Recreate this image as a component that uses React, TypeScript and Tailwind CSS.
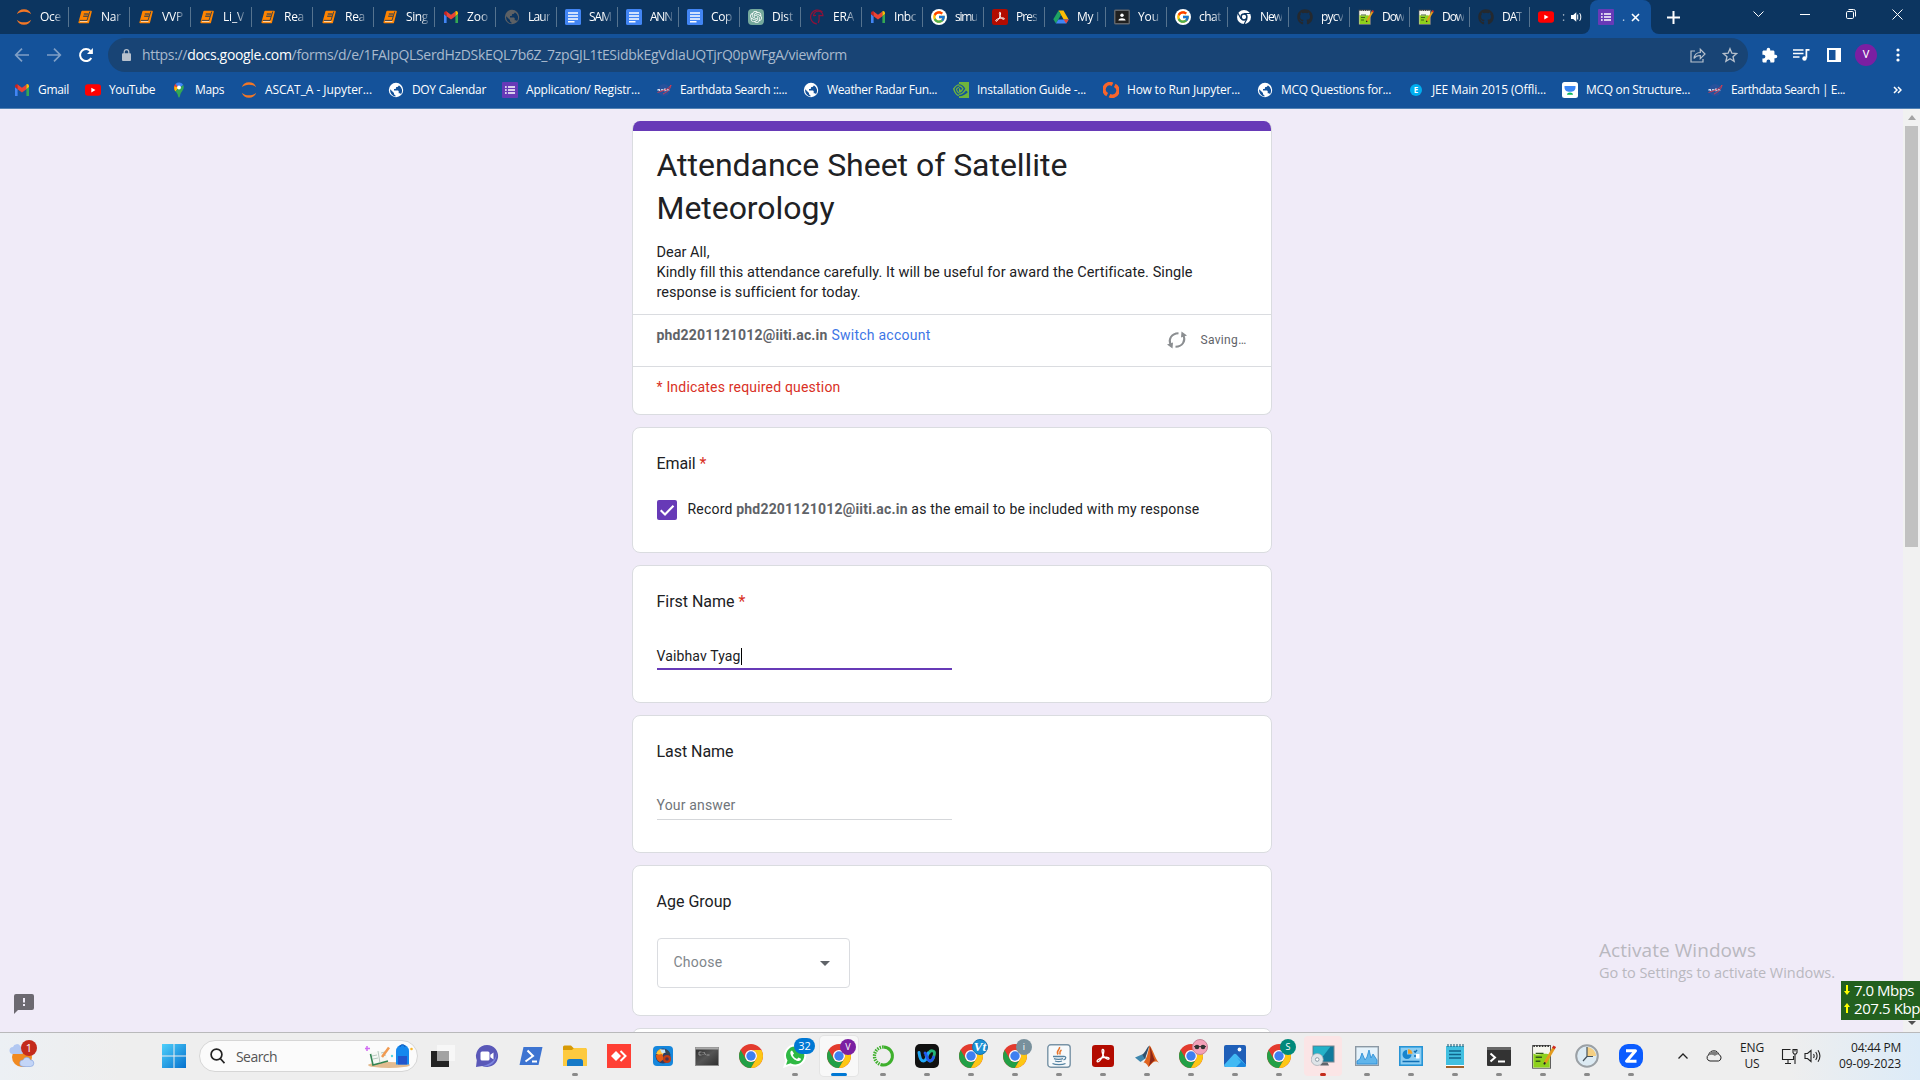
import React, { useLayoutEffect, useRef } from "react";
import { FcGoogle } from "react-icons/fc";
import { FaGithub } from "react-icons/fa";
import { SiNvidia, SiOpenai } from "react-icons/si";

/** Text that spreads its letters so the run fills exactly `w` pixels. */
function Fit({ w, className = "", children }: { w: number; className?: string; children: React.ReactNode }) {
  const ref = useRef<HTMLSpanElement>(null);
  useLayoutEffect(() => {
    const el = ref.current;
    if (!el) return;
    el.style.letterSpacing = "0px";
    const natural = el.getBoundingClientRect().width;
    const n = (el.textContent || "").length;
    el.style.letterSpacing = (w - natural) / n + "px";
  }, [w]);
  return (
    <span ref={ref} className={"inline-block shrink-0 whitespace-pre " + className}>
      {children}
    </span>
  );
}

/* ---------- logos ---------- */

const Chrome = ({ s = 24 }: { s?: number }) => (
  <svg width={s} height={s} viewBox="1 1 46 46">
    <circle cx="24" cy="24" r="23" fill="#e33b2e" />
    <path d="M4.100 12.500 14 29.750A11.500 11.500 0 0 0 34 29.750L24 47A23 23 0 0 1 4.100 12.500z" fill="#23a046" />
    <path d="M43.900 12.500A23 23 0 0 1 24 47L34 29.750A11.500 11.500 0 0 0 24 12.500z" fill="#fdc714" />
    <circle cx="24" cy="24" r="11.500" fill="#fff" />
    <circle cx="24" cy="24" r="9" fill="#3f7ff0" />
  </svg>
);
const Gmail = () => (
  <svg width="16" height="16" viewBox="0 0 16 16">
    <path d="M1 14h2.600V7.200L1 5z" fill="#4285f4" />
    <path d="M12.400 14H15V5l-2.600 2.200z" fill="#34a853" />
    <path d="M1 5v-.9C1 2.400 2.700 1.600 4 2.600L3.600 7.200z" fill="#c5221f" />
    <path d="M3.600 2.400 8 5.800l4.400-3.400v4.800L8 10.500 3.600 7.200z" fill="#ea4335" />
    <path d="M15 5v-.9c0-1.700-1.700-2.500-2.600-1.700v4.800z" fill="#fbbc04" />
  </svg>
);
const Jupyter = () => (
  <svg width="16" height="16" viewBox="0 0 16 16" fill="#f37726">
    <path d="M.8 5.200A7.700 7.700 0 0 1 15.200 5.200C12 1.800 4 1.800.8 5.200z" />
    <path d="M.8 10.800A7.700 7.700 0 0 0 15.200 10.800C12 14.200 4 14.200.8 10.800z" />
  </svg>
);
const Book = () => (
  <svg width="16" height="16" viewBox="0 0 16 16">
    <path d="M5.200 2.500H14l-2.800 11H2.200z" fill="#ff8400" stroke="#ff8400" strokeWidth="1.600" strokeLinejoin="round" />
    <path d="M6.800 5h4.700M6.200 7.200h4.700" stroke="#0c3560" strokeWidth="1" />
    <path d="M2.600 11.400H10l2.800-8.900" stroke="#0c3560" strokeWidth=".8" fill="none" />
    <path d="M3 12.600h7.500" stroke="#ffe3c4" strokeWidth=".9" />
  </svg>
);
const Globe = ({ bg = "#fff", fg = "#14529a" }: { bg?: string; fg?: string }) => (
  <svg width="16" height="16" viewBox="0 0 16 16">
    <circle cx="8" cy="8" r="7.200" fill={bg} />
    <path d="M2.200 7.200 6 11v1.200l1.500 1.300v1A6.300 6.300 0 0 1 2.200 7.200zM13 12.200c-.3-.8-1-1-1.600-1h-.7V9.200L10 8.500H6V7h1.400l.7-.8V5h1.400l1.300-1.300v-.4a6.200 6.200 0 0 1 2.200 8.900z" fill={fg} />
  </svg>
);
const Docs = () => (
  <svg width="16" height="16" viewBox="0 0 16 16">
    <rect width="16" height="16" rx="1.500" fill="#4285f4" />
    <path d="M3 4h10M3 7h10M3 10h10M3 12.800h6.500" stroke="#fff" strokeWidth="1.600" />
  </svg>
);
const FormIcon = () => (
  <svg width="16" height="16" viewBox="0 0 16 16">
    <rect width="16" height="16" rx="1" fill="#673ab7" />
    <path d="M6 5h7M6 8h7M6 11h7" stroke="#fff" strokeWidth="1.600" />
    <path d="M3 5h1.700M3 8h1.700M3 11h1.700" stroke="#fff" strokeWidth="1.600" />
  </svg>
);
const Gpt = () => (
  <span className="flex size-4 items-center justify-center rounded-sm bg-[#75a99c] text-white">
    <SiOpenai size={12} />
  </span>
);
const Era = () => (
  <svg width="16" height="16" viewBox="0 0 16 16" fill="none" stroke="#8e1238">
    <path d="M8 15A7 7 0 1 1 13.500 3" strokeWidth="1.200" />
    <path d="M4.500 7a4.500 4.500 0 0 1 9.500-.3L10 6.500c0 3 .8 4.500-.8 7.500M4.500 7 7 6.200" strokeWidth="1.200" />
  </svg>
);
const Pdf = ({ s = 16 }: { s?: number }) => (
  <svg width={s} height={s} viewBox="0 0 24 24">
    <rect width="24" height="24" rx="3.500" fill="#b30b00" />
    <path d="M11.800 4.800c1.700 0 1.200 3.700-.2 7.200-1.500 3.600-4.300 7.200-5.700 6.200-1.400-1.200 2-3.600 6-4.400 3.800-.8 6.900-.4 6.700 1-.3 1.500-3.600.4-5.600-2.200-1.900-2.500-2.700-7.800-1.200-7.800z" fill="none" stroke="#fff" strokeWidth="1.500" />
  </svg>
);
const Drive = () => (
  <svg width="16" height="16" viewBox="0 0 16 16">
    <path d="M5.500 1.500h5L15.700 10.500h-5z" fill="#fbbc04" />
    <path d="M5.500 1.500 8 6 2.900 14.500.3 10.300z" fill="#1ea362" />
    <path d="M5.400 10.500h10.300l-2.500 4H2.900z" fill="#4285f4" />
    <path d="M13.200 14.500l2.500-4h-5z" fill="#ea4335" />
  </svg>
);
const Classroom = () => (
  <svg width="16" height="16" viewBox="0 0 16 16">
    <rect x=".7" y="1.200" width="14.600" height="13.600" rx="1" fill="#202020" stroke="#61656a" strokeWidth="1.500" />
    <circle cx="8" cy="6.200" r="1.700" fill="#fff" />
    <path d="M4.300 11.500C5 8.500 11 8.500 11.700 11.500z" fill="#fff" />
  </svg>
);
const GoogleG = () => (
  <span className="flex size-4 items-center justify-center rounded-full bg-white">
    <FcGoogle size={14} />
  </span>
);
const ChromeMono = () => (
  <svg width="16" height="16" viewBox="0 0 16 16">
    <circle cx="8" cy="8" r="7" fill="#fff" />
    <circle cx="8" cy="8" r="2.900" fill="none" stroke="#0c3560" strokeWidth="1.500" />
    <path d="M8 4.500h6.500M5 9.800 2 4.300M11 9.800 8.200 15" stroke="#0c3560" strokeWidth="1.200" />
  </svg>
);
const NotepadPP = ({ s = 16 }: { s?: number }) => (
  <svg width={s} height={s} viewBox="0 0 16 16">
    <rect x="1" y="1" width="11.500" height="14.500" fill="#f5f5ee" stroke="#555" strokeWidth=".6" />
    <path d="M1.500 6c4 2 7-1 10.500 1v8H1.500z" fill="#8ed11c" />
    <path d="M1.500 1.300h10.500" stroke="#333" strokeWidth="1.200" strokeDasharray="1 .8" />
    <path d="M3 6h5M3 8.500h4M3 11h3" stroke="#31581a" strokeWidth=".9" />
    <path d="M14.600 2.500 9 12" stroke="#e39b1e" strokeWidth="1.900" />
    <path d="M15.200 1.400l-.9 1.500" stroke="#cf2d23" strokeWidth="2" />
    <path d="M9 11.700l-.6 1.300" stroke="#222" strokeWidth="1.200" />
  </svg>
);
const YouTube = () => (
  <svg width="16" height="16" viewBox="0 0 16 16">
    <rect y="2.300" width="16" height="11.500" rx="2.800" fill="#f00" />
    <path d="M6.300 5.700v4.700L10.500 8z" fill="#fff" />
  </svg>
);
const MapsPin = () => (
  <svg width="16" height="16" viewBox="0 0 16 16">
    <path d="M3.100 4.500c-.3 1.900.2 3.300 1.200 4.700L9 4z" fill="#fbbc04" />
    <path d="M3.100 4.400A5 5 0 0 1 4.600 1.800L8 5 4 8.500z" fill="#ea4335" />
    <path d="M4.500 1.900A5 5 0 0 1 12.300 3L8 6z" fill="#4285f4" />
    <path d="M12.300 3c1.800 4-2 6.500-2.900 9.300-.3 1.300-.5 3.200-1.400 3.200s-1-1.900-1.500-3.200C6 11 5 10 4.300 9.200z" fill="#34a853" />
    <path d="M3.300 4.500 4.300 9.200 8 5.500z" fill="#fbbc04" />
    <circle cx="8" cy="5.500" r="1.900" fill="#fff" />
  </svg>
);
const Nasa = () => (
  <svg width="16" height="16" viewBox="0 0 16 16">
    <circle cx="8" cy="8" r="6" fill="#26519b" />
    <path d="M2 8.800V7l1.500 1.800V7M5 8.800 6 7l1 1.800M8 8.700h1.800V7.800H8V7h1.800M11 8.800 12 7l1 1.800" stroke="#fff" strokeWidth=".8" fill="none" />
    <path d="M1.500 10.500C7 8.500 12 8 15 3c-1 5-4 7-8 9" stroke="#e0394a" strokeWidth=".9" fill="none" />
  </svg>
);
const OrangeRing = () => (
  <svg width="16" height="16" viewBox="0 0 16 16" fill="none" stroke="#f9652b" strokeWidth="3.600">
    <path d="M4.200 12.600A5.700 5.700 0 0 1 9.500 2.300" />
    <path d="M11.800 3.400A5.700 5.700 0 0 1 6.500 13.700" />
  </svg>
);
const Embibe = () => (
  <span className="ml-0.5 flex size-3 items-center justify-center rounded-full bg-[#00aef0] font-['Open_Sans',sans-serif] text-[8px] font-bold text-white">E</span>
);
const Unacademy = () => (
  <svg width="16" height="16" viewBox="0 0 16 16">
    <rect width="16" height="16" rx="2.500" fill="#fff" />
    <path d="M2.500 4h11v1c0 3.500-2 4.700-5.500 4.700S2.500 8.500 2.500 5z" fill="#3b86f5" />
    <path d="M5 12.800c0-3 6-3 6 0z" fill="#09b55b" />
  </svg>
);

/* ---------- browser chrome ---------- */

const tabs: [React.ReactNode, string, number][] = [
  [<Jupyter />, "Oce", 21],
  [<Book />, "Nar", 20],
  [<Book />, "VVP", 21],
  [<Book />, "Li_V", 21],
  [<Book />, "Rea", 20],
  [<Book />, "Rea", 20],
  [<Book />, "Sing", 22],
  [<Gmail />, "Zoo", 21],
  [<Globe bg="#5d6165" fg="#0c3560" />, "Laur", 22],
  [<Docs />, "SAM", 22],
  [<Docs />, "ANN", 22],
  [<Docs />, "Cop", 21],
  [<Gpt />, "Dist", 21],
  [<Era />, "ERA", 21],
  [<Gmail />, "Inbc", 22],
  [<GoogleG />, "simu", 22],
  [<Pdf />, "Pres", 21],
  [<Drive />, "My I", 22],
  [<Classroom />, "You", 21],
  [<GoogleG />, "chat", 22],
  [<ChromeMono />, "New", 22],
  [<FaGithub size={16} color="#24292f" />, "pycv", 22],
  [<NotepadPP />, "Dow", 22],
  [<NotepadPP />, "Dow", 22],
  [<FaGithub size={16} color="#24292f" />, "DAT", 20],
];

function TabStrip() {
  return (
    <div className="flex h-[34px] bg-[#0c3560] pl-2 text-[12px] text-white">
      {tabs.map(([icon, label, tw], i) => (
        <div key={i} className={"flex shrink-0 items-center pl-2 " + (i > 21 ? "w-[60px]" : "w-[61px]")}>
          <span className="flex w-4 shrink-0">{icon}</span>
          <Fit w={tw} className="ml-2 [mask-image:linear-gradient(to_right,black_65%,rgba(0,0,0,0.25))]">{label}</Fit>
          <span className="ml-auto h-5 w-px bg-[#55738f]" />
        </div>
      ))}
      <div className="flex w-[60px] shrink-0 items-center pl-2">
        <YouTube />
        <span className="ml-2 w-1 opacity-60">:</span>
        <svg className="ml-1" width="12" height="12" viewBox="0 0 12 12">
          <path d="M1 4h2.200L6.300 1.300v9.400L3.200 8H1z" fill="#fff" />
          <path d="M7.700 3.500v5M9.700 2.200c1.500 2 1.500 5.600 0 7.600" stroke="#fff" strokeWidth="1" fill="none" />
        </svg>
      </div>
      <div className="relative flex w-[61px] shrink-0 items-center rounded-t-lg bg-[#14529a] pl-2">
        <span className="absolute bottom-0 -left-2 size-2 bg-[#14529a]"><span className="block size-2 rounded-br-lg bg-[#0c3560]" /></span>
        <span className="absolute -right-2 bottom-0 size-2 bg-[#14529a]"><span className="block size-2 rounded-bl-lg bg-[#0c3560]" /></span>
        <FormIcon />
        <span className="ml-2 opacity-70">.</span>
        <svg className="ml-1.5" width="9" height="9" viewBox="0 0 9 9" stroke="#fff" strokeWidth="1.600"><path d="M1 1l7 7M8 1 1 8" /></svg>
      </div>
      <svg className="mt-[11px] ml-4" width="13" height="13" viewBox="0 0 13 13" stroke="#fff" strokeWidth="2"><path d="M6.500 0v13M0 6.500h13" /></svg>
      <div className="ml-auto flex items-start gap-9 pt-[9px] pr-[17px]">
        <svg width="11" height="11" viewBox="0 0 11 11" fill="none" stroke="#fff"><path d="M.5 2.500l5 5 5-5" /></svg>
        <svg width="10" height="11" viewBox="0 0 10 11" stroke="#fff"><path d="M0 5.500h10" /></svg>
        <svg width="10" height="10" viewBox="0 0 10 10" fill="none" stroke="#fff"><rect x=".5" y="2.500" width="7" height="7" rx="1.200" /><path d="M2.500.5h5a2 2 0 0 1 2 2v5" /></svg>
        <svg width="11" height="11" viewBox="0 0 11 11" stroke="#fff"><path d="M.5.500l10 10M10.500.500l-10 10" /></svg>
      </div>
    </div>
  );
}

function Toolbar() {
  return (
    <div className="flex h-[38px] items-center pt-1 pl-[14px]">
      <svg width="16" height="16" viewBox="0 0 16 16" fill="none" stroke="#7f9fc6" strokeWidth="1.700"><path d="M15 8H2M8 1.700 1.700 8 8 14.300" /></svg>
      <svg className="ml-4" width="16" height="16" viewBox="0 0 16 16" fill="none" stroke="#7f9fc6" strokeWidth="1.700"><path d="M1 8h13M8 1.700 14.300 8 8 14.300" /></svg>
      <svg className="ml-4" width="16" height="16" viewBox="0 0 16 16" fill="none" stroke="#fff" strokeWidth="2"><path d="M13.300 11A6 6 0 1 1 12.500 4" /><path d="M14.900 1v6H9z" fill="#fff" stroke="none" /></svg>
      <div className="ml-[14px] flex h-[34px] w-[1640px] items-center rounded-full bg-[#184475] pl-[14px]">
        <svg width="9" height="12" viewBox="0 0 9 12"><rect y="4.300" width="9" height="7.700" rx="1" fill="#b7c1cd" /><path d="M2.200 5V2.900a2.300 2.300 0 0 1 4.600 0V5" fill="none" stroke="#b7c1cd" strokeWidth="1.200" /></svg>
        <Fit w={705} className="-mt-px ml-[11px] text-[14px] text-[#a9bace]">
          https://<span className="text-white">docs.google.com</span>/forms/d/e/1FAIpQLSerdHzDSkEQL7b6Z_7zpGJL1tESidbkEgVdIaUQTjrQ0pWFgA/viewform
        </Fit>
        <svg className="ml-auto" width="16" height="16" viewBox="0 0 16 16" fill="none" stroke="#b7c1cd" strokeWidth="1.200"><path d="M5 4H1v11h12v-3M4 11.500c.5-4 3-6 6.300-6V2.300L15 7l-4.700 4.600V8.500C7.500 8.400 5.500 9.300 4 11.500z" /></svg>
        <svg className="mr-[10px] ml-4" width="16" height="16" viewBox="0 0 24 24" fill="none" stroke="#b7c1cd" strokeWidth="2"><path d="m12 2.500 2.800 6.700 7.200.6-5.500 4.700 1.700 7L12 17.700l-6.200 3.800 1.700-7L2 9.800l7.200-.6z" /></svg>
      </div>
      <svg className="ml-[13px]" width="17" height="17" viewBox="0 0 24 24" fill="#fff"><path d="M20.500 11H19V7c0-1.100-.9-2-2-2h-4V3.500a2.500 2.500 0 0 0-5 0V5H4c-1.100 0-2 .9-2 2v3.800h1.500a2.700 2.700 0 0 1 0 5.400H2V20c0 1.100.9 2 2 2h3.800v-1.500a2.700 2.700 0 0 1 5.400 0V22H17c1.100 0 2-.9 2-2v-4h1.500a2.500 2.500 0 0 0 0-5z" /></svg>
      <svg className="ml-[15px]" width="17" height="14" viewBox="0 0 17 14" fill="none" stroke="#fff" strokeWidth="1.700"><path d="M0 2h10.500M0 5.500h10.500M0 9h6.500M16.500 1.800H13.400v8" /><circle cx="11.500" cy="10.500" r="2.200" fill="#fff" stroke="none" /></svg>
      <svg className="ml-[17px]" width="14" height="14" viewBox="0 0 14 14"><rect x="1" y="1" width="12" height="12" fill="none" stroke="#fff" strokeWidth="2" /><path d="M8.500 1h4.500v12H8.500z" fill="#fff" /></svg>
      <span className="ml-[14px] flex size-[22px] items-center justify-center rounded-full bg-[#7b1fa2] font-[Roboto,sans-serif] text-[11px] text-white">V</span>
      <svg className="ml-[19px]" width="4" height="14" viewBox="0 0 4 14" fill="#fff"><circle cx="2" cy="2" r="1.600" /><circle cx="2" cy="7" r="1.600" /><circle cx="2" cy="12" r="1.600" /></svg>
    </div>
  );
}

const bookmarks: [React.ReactNode, string, number, number][] = [
  [<Gmail />, "Gmail", 31, 71],
  [<YouTube />, "YouTube", 46, 86],
  [<MapsPin />, "Maps", 29, 70],
  [<Jupyter />, "ASCAT_A - Jupyter...", 107, 147],
  [<Globe />, "DOY Calendar", 74, 114],
  [<FormIcon />, "Application/ Registr...", 114, 154],
  [<Nasa />, "Earthdata Search ::...", 107, 147],
  [<Globe />, "Weather Radar Fun...", 110, 150],
  [<SiNvidia size={16} color="#6fb43c" className="scale-y-150" />, "Installation Guide -...", 109, 150],
  [<OrangeRing />, "How to Run Jupyter...", 113, 154],
  [<Globe />, "MCQ Questions for...", 110, 151],
  [<Embibe />, "JEE Main 2015 (Offli...", 114, 154],
  [<Unacademy />, "MCQ on Structure...", 104, 145],
  [<Nasa />, "Earthdata Search | E...", 114, 154],
];

function Bookmarks() {
  return (
    <div className="flex h-9 items-center pl-[14px] text-[12px] text-white">
      {bookmarks.map(([icon, label, tw, w], i) => (
        <div key={i} className="flex shrink-0 items-center gap-2" style={{ width: w }}>
          <span className="flex w-4 shrink-0">{icon}</span>
          <Fit w={tw}>{label}</Fit>
        </div>
      ))}
      <svg className="ml-8" width="9" height="8" viewBox="0 0 9 8" fill="none" stroke="#fff" strokeWidth="1.500"><path d="M1 1l3 3-3 3M5 1l3 3-3 3" /></svg>
    </div>
  );
}

/* ---------- form ---------- */

const cardBase = "w-[640px] shrink-0 rounded-lg border border-[#dadce0] bg-white";

function Heading({ w, label, required }: { w: number; label: string; required?: boolean }) {
  return (
    <div className="flex h-6 items-center gap-1 text-[16px] leading-6 text-[#202124]">
      <Fit w={w}>{label}</Fit>
      {required && <span className="text-[#d93025]">*</span>}
    </div>
  );
}

function FormPage() {
  return (
    <div className="flex flex-1 flex-col items-center gap-3 overflow-hidden pt-3 font-[Roboto,sans-serif]">
      <div className={cardBase + " h-[294px] overflow-hidden border-t-0"}>
        <div className="-mx-px h-[10px] bg-[#673ab7]" />
        <div className="h-[183px] px-6 pt-[13px]">
          <h1 className="text-[32px] leading-[43px] text-[#202124]">
            <Fit w={411}>Attendance Sheet of Satellite</Fit>
            <br />
            <Fit w={178}>Meteorology</Fit>
          </h1>
          <p className="mt-[13px] text-[14.500px] leading-5 text-[#202124]">
            <Fit w={53}>Dear All,</Fit>
            <br />
            <Fit w={535}>Kindly fill this attendance carefully. It will be useful for award the Certificate. Single</Fit>
            <br />
            <Fit w={203}>response is sufficient for today.</Fit>
          </p>
        </div>
        <div className="flex h-[52px] border-t border-[#dadce0] px-6 text-[14px] leading-5">
          <div className="flex gap-1 pt-[10px]">
            <Fit w={171} className="font-bold text-[#5f6368]">phd2201121012@iiti.ac.in</Fit>
            <Fit w={99} className="text-[#3d76e6]">Switch account</Fit>
          </div>
          <div className="ml-auto flex items-center gap-[14px] pb-0.5 text-[12px] text-[#5f6368]">
            <svg width="20" height="18" viewBox="0 0 20 18" fill="none" stroke="#8b8e91" strokeWidth="2">
              <path d="M3.300 13C1.500 8.500 4 2.500 11.500 2.200M16.700 5C18.500 9.500 16 15.500 8.500 15.800" />
              <path d="M0 13.500l6-2-.5 6zM20 4.500 14 6.500l.5-6z" fill="#8b8e91" stroke="none" />
            </svg>
            <Fit w={46}>Saving…</Fit>
          </div>
        </div>
        <div className="h-12 border-t border-[#dadce0] px-6 pt-[10px] text-[14px] leading-5 text-[#d93025]">
          <Fit w={184}>* Indicates required question</Fit>
        </div>
      </div>

      <div className={cardBase + " h-[126px] px-6 pt-6"}>
        <Heading w={39} label="Email" required />
        <div className="mt-6 flex h-5 items-center text-[14px] text-[#202124]">
          <svg width="20" height="20" viewBox="0 0 20 20"><rect width="20" height="20" rx="2" fill="#673ab7" /><path d="M3.700 10.200 8 14.400 16.500 5.700" fill="none" stroke="#fff" strokeWidth="2.100" /></svg>
          <Fit w={512} className="-mt-0.5 ml-[11px]">
            Record <b className="font-bold text-[#5f6368]">phd2201121012@iiti.ac.in</b> as the email to be included with my response
          </Fit>
        </div>
      </div>

      <div className={cardBase + " h-[138px] px-6 pt-6"}>
        <Heading w={78} label="First Name" required />
        <div className="mt-[30px] flex h-6 w-[295px] items-center text-[14px] text-[#202124]">
          <Fit w={84}>Vaibhav Tyag</Fit>
          <span className="h-[17px] w-px bg-black" />
        </div>
        <div className="h-0.5 w-[295px] bg-[#673ab7]" />
      </div>

      <div className={cardBase + " h-[138px] px-6 pt-6"}>
        <Heading w={77} label="Last Name" />
        <div className="mt-[29px] flex h-6 w-[295px] items-center text-[14px] text-[#70757a]">
          <Fit w={79}>Your answer</Fit>
        </div>
        <div className="mt-0.5 h-px w-[295px] bg-[#d5d7da]" />
      </div>

      <div className={cardBase + " h-[151px] px-6 pt-6"}>
        <Heading w={75} label="Age Group" />
        <div className="mt-6 flex h-[50px] w-[193px] items-center rounded border border-[#dadce0] pr-[19px] pl-4 text-[14px] text-[#80868b]">
          <Fit w={49} className="-mt-0.5">Choose</Fit>
          <svg className="ml-auto" width="10" height="5" viewBox="0 0 10 5"><path d="M0 0h10L5 5z" fill="#5f6368" /></svg>
        </div>
      </div>

      <div className={cardBase + " h-[138px]"} />
    </div>
  );
}

/* ---------- taskbar ---------- */

const Badge = ({ className, children }: { className: string; children?: React.ReactNode }) => (
  <span className={"absolute flex items-center justify-center rounded-full text-white " + className}>{children}</span>
);

const Person = ({ children, badge }: { children: React.ReactNode; badge: string }) => (
  <>
    <Chrome />
    <Badge className={"-top-[5px] left-[13px] size-4 text-[9px] " + badge}>{children}</Badge>
  </>
);

type App = { icon: React.ReactNode; mark?: "dot" | "active" | "alert" };

const apps: App[] = [
  { icon: <svg width="24" height="24" viewBox="0 0 24 24"><rect y="7" width="18" height="16" fill="#242424" /><rect x="6" y="1" width="18" height="16" fill="#f7f7f7" /><path d="M6 7h12v10H6z" fill="#a2a2a2" /></svg> },
  { icon: <svg width="24" height="24" viewBox="0 0 24 24"><path d="M12 1a11 11 0 1 1-4.500 21L1 23l.8-6.700A11 11 0 0 1 12 1z" fill="#5a58b8" /><path d="M20 6A11 11 0 0 1 8 22l-1.500.4C20 19 23 12 20 6z" fill="#7d86e0" /><rect x="5.500" y="7.500" width="9" height="9" rx="1.500" fill="#fff" /><path d="M15.300 10.800 18.500 8.500v7l-3.200-2.300z" fill="#fff" /></svg> },
  { icon: <svg width="24" height="24" viewBox="0 0 24 24"><path d="M4.500 3H23.500L19.500 21H.5z" fill="#3d74d1" /><path d="M8.500 6.500 14 12l-7.500 5.500M13 17.500h5" fill="none" stroke="#fff" strokeWidth="2" /></svg> },
  { mark: "dot", icon: <svg width="24" height="24" viewBox="0 0 24 24"><path d="M0 3a1.500 1.500 0 0 1 1.500-1.500H8L10.500 4H23v4H0z" fill="#d79a05" /><path d="M0 6h9l2-2h11.500A1.500 1.500 0 0 1 24 5.500V22H0z" fill="#fdca3f" /><path d="M4 22v-4.500A2.500 2.500 0 0 1 6.500 15h11a2.500 2.500 0 0 1 2.500 2.500V22z" fill="#1679c7" /></svg> },
  { icon: <svg width="24" height="24" viewBox="0 0 24 24"><rect width="24" height="24" fill="#ff3f34" /><path d="M9 7l5 5-5 5-5-5z" fill="#fff" /><path d="M13.500 7l5 5-5 5" fill="none" stroke="#fff" strokeWidth="2" /></svg> },
  { icon: <svg width="20" height="20" viewBox="0 0 20 20"><rect width="20" height="20" rx="4" fill="#1687dc" /><circle cx="10" cy="10" r="7.500" fill="#2d3d66" /><path d="M3 8a7.500 7.500 0 0 1 4-5l5 2-3 5z" fill="#ffc23a" /><path d="M3 9l6-1 2 5-4 3a7.500 7.500 0 0 1-4-7z" fill="#e25b16" /><path d="M7 3.500h5l1 3-4 1z" fill="#cbe8f8" /><circle cx="14" cy="13" r="4" fill="#bf3c12" /><circle cx="14" cy="13" r="1.800" fill="#4a3250" /><path d="M12 4c3 0 5 2 5.500 5L13 8z" fill="#37474f" /></svg> },
  { icon: <svg width="24" height="19" viewBox="0 0 24 19"><defs><linearGradient id="cmd" x1="0" y1="0" x2="1" y2="1"><stop stopColor="#2b2b2b" /><stop offset=".5" stopColor="#555" /><stop offset="1" stopColor="#2e2e2e" /></linearGradient></defs><rect x=".5" y=".5" width="23" height="18" fill="url(#cmd)" stroke="#8c8c8c" /><path d="M.5 1.500h23" stroke="#aaa" strokeWidth="2" /><path d="M6.500 5H4v3h2.500M8 5v.8M8 7.200V8M9 5l1.500 3M11.500 8h3" stroke="#aaa" strokeWidth=".8" fill="none" /></svg> },
  { icon: <Chrome /> },
  { mark: "dot", icon: <><svg width="24" height="24" viewBox="0 0 24 24"><path d="M12.500 1.500a10 10 0 1 1-5 18.800L1.500 22.500l1.900-6A10 10 0 0 1 12.500 1.500z" fill="#2fb944" stroke="#fff" strokeWidth="2" /><path d="M9 6.500c-1.500.3-2 2-1.500 3.500 1 3.500 4 6.300 7.500 7 1.500.3 3-.5 3-2.200l-2.500-1.300-1.500 1.500c-2-.7-3.500-2.200-4.200-4l1.200-1.500z" fill="#fff" /></svg><Badge className="-top-[6px] left-[11px] h-4 w-[21px] bg-[#0078d4] text-[11px]">32</Badge></> },
  { mark: "active", icon: <Person badge="bg-[#7b1fa2]">V</Person> },
  { mark: "dot", icon: <svg width="24" height="24" viewBox="0 0 24 24" fill="none"><path d="M12.500 3a9 9 0 1 1-3 17.500" stroke="#3eb02c" strokeWidth="3" /><path d="M12.500 3a9 9 0 0 0-3 17.500" stroke="#3eb02c" strokeWidth="3.300" strokeDasharray="1.500 1" /></svg> },
  { mark: "dot", icon: <svg width="24" height="24" viewBox="0 0 24 24"><rect width="24" height="24" rx="5" fill="#111" /><path d="M14 9c1.500-3.500 6-2.500 5.500.5-.6 4-2 7.500-4.500 7.500-2.200 0-3-2.500-4-5.500" fill="none" stroke="#24b57a" strokeWidth="2.800" strokeLinecap="round" /><path d="M4 8.500C4.500 12.500 5.500 17 8.500 17s3.500-5 4.500-8" fill="none" stroke="#21a8f5" strokeWidth="3" strokeLinecap="round" /><path d="M10 9c1.500 1 2 8 5 8 2 0 3-2 3.500-4" fill="none" stroke="#2359ee" strokeWidth="2.800" strokeLinecap="round" /></svg> },
  { mark: "dot", icon: <Person badge="bg-[#1a91d6] border border-[#1873ad] font-['Liberation_Serif',serif] !text-[13px] font-bold italic">Vt</Person> },
  { mark: "dot", icon: <Person badge="bg-[#78909c]">i</Person> },
  { mark: "dot", icon: <svg width="24" height="24" viewBox="0 0 24 24" fill="none"><rect x=".8" y=".8" width="22.400" height="22.400" rx="3" fill="#f6f9fb" stroke="#7893a6" strokeWidth="1.400" /><path d="M12.500 3c1 2.500-4 3.500-1.500 7.500M14.500 6c-2.500 1.500-1.500 2.500-1.500 4.500" stroke="#e8742a" strokeWidth="1.500" /><path d="M6 12.500h10.500M7 14.700c2 .8 7 .8 9 0M8 17c2 .8 5 .8 7 0M16.500 12.500c3-.5 3 2.500 0 3.300M5.500 19.500c3 1.500 10 1.500 13 0" stroke="#5382a1" strokeWidth="1.300" /></svg> },
  { mark: "dot", icon: <Pdf s={22} /> },
  { mark: "dot", icon: <svg width="24" height="24" viewBox="0 0 24 24"><path d="M0 13.500 7 10.500l4 3.500-5.500 4z" fill="#3f87ae" /><path d="M7 10.500c3-1 4.500-7 7.500-9L10 15z" fill="#31506c" /><path d="M14.500 1.500C17.500 4 20 14.500 24 19c-4-3-6-1-10.500 4-1.500-3-3-4.500-5-4.500C12 15 13 8 14.500 1.500z" fill="#e0641f" /><path d="M14.500 1.500C16 9 15.500 18 13.500 23c3-4 5-6.500 6.500-6.500C17.500 11 16 4 14.500 1.500z" fill="#8e2717" /></svg> },
  { mark: "dot", icon: <Person badge="bg-[#f3a0b8] border border-[#c78295]"><svg width="14" height="6" viewBox="0 0 14 6"><path d="M1 2.500h12" stroke="#444" /><circle cx="4" cy="3" r="2.300" fill="#333" /><circle cx="10" cy="3" r="2.300" fill="#333" /></svg></Person> },
  { mark: "dot", icon: <svg width="22" height="22" viewBox="0 0 22 22"><rect width="22" height="22" rx="2" fill="#1f5fb8" /><path d="M0 20 9.500 9.500a2 2 0 0 1 3 0L22 20a2 2 0 0 1-2 2H2a2 2 0 0 1-2-2z" fill="#42baf4" /><path d="M13 12.500 22 20a2 2 0 0 1-2 2h-8l5-5z" fill="#1a86dd" /><circle cx="15.500" cy="4.500" r="1.900" fill="#fff" /></svg> },
  { mark: "dot", icon: <Person badge="bg-[#00897b]">S</Person> },
  { mark: "alert", icon: <svg width="24" height="22" viewBox="0 0 24 22"><rect x="2" y="1" width="21" height="16" fill="#107a9c" stroke="#7b8790" /><path d="M2.500 1.500h17L8 16.500H2.500z" fill="#25b1c8" /><path d="M9 20.500h9l-1.500-3h-5z" fill="#60666d" /><circle cx="6.200" cy="14.500" r="6" fill="#dfe4e8" stroke="#9ea8b0" strokeWidth=".7" /><circle cx="6.200" cy="14.500" r="1.800" fill="#fff" stroke="#8c9aa6" /></svg> },
  { mark: "dot", icon: <svg width="24" height="20" viewBox="0 0 24 20"><rect x=".7" y=".7" width="22.600" height="18.600" fill="#e5f2fb" stroke="#8b98a4" strokeWidth="1.400" /><path d="M2 15l3-2 2-6 3 7 2-3 2-7 2 8 2-4 4 6v4H2z" fill="#60b5eb" stroke="#2489d3" strokeWidth=".8" /></svg> },
  { mark: "dot", icon: <svg width="24" height="20" viewBox="0 0 24 20"><rect x=".8" y=".8" width="22.400" height="18.400" fill="#8ccdf2" stroke="#2694d6" strokeWidth="1.600" /><path d="M8 4a4.500 4.500 0 1 0 4.500 4.500H8z" fill="#1784cd" /><path d="M9 3.200a4.500 4.500 0 0 1 4.500 4.500H9z" fill="#f0a02d" /><path d="M15 5l1.200 1.200L18 4M15 10h5M3.500 15.500h17" stroke="#0f6fb5" strokeWidth="1.500" fill="none" /><rect x="17" y="8" width="3.500" height="4.500" fill="#fff" /></svg> },
  { mark: "dot", icon: <svg width="18" height="24" viewBox="0 0 18 24"><path d="M0 2h18v19H0z" fill="#41bfe0" /><path d="M2 0v3M5 0v3M8 0v3M11 0v3M14 0v3M17 0v3" stroke="#245f78" strokeWidth="1.100" /><path d="M3 7h12M3 10.500h12M3 14h12" stroke="#10648a" strokeWidth="1.500" /><path d="M0 21h18v1.500H0z" fill="#fff" /><path d="M0 22h18v2H0z" fill="#a3622a" /></svg> },
  { mark: "dot", icon: <svg width="24" height="19" viewBox="0 0 24 19"><rect width="24" height="19" rx="1" fill="#333" /><path d="M0 0h24v3H0z" fill="#666" /><path d="M3.500 6.500 8 10.500l-4.500 4M11 14.500h7" fill="none" stroke="#fff" strokeWidth="2" /></svg> },
  { mark: "dot", icon: <NotepadPP s={25} /> },
  { mark: "dot", icon: <svg width="24" height="24" viewBox="0 0 24 24"><circle cx="12" cy="12" r="10.800" fill="#dceaf3" stroke="#9aa0a5" strokeWidth="2" /><path d="M12 12V3a9 9 0 0 1 9 9z" fill="#f4cf83" /><path d="M12 3v9.500h6M12 12.500 8 17" stroke="#45525c" strokeWidth="1.200" fill="none" /></svg> },
  { mark: "dot", icon: <svg width="24" height="24" viewBox="0 0 24 24"><rect width="24" height="24" rx="9" fill="#0b5cff" /><path d="M7 6.800h9.500L7.500 17.200h10" fill="none" stroke="#fff" strokeWidth="3" strokeLinejoin="round" /></svg> },
];

function Taskbar() {
  return (
    <div className="flex h-12 shrink-0 items-center border-t border-[#b9b9bb] bg-[linear-gradient(90deg,#ecf0f4_0,#eeeeee_120px,#eeeeee_1790px,#dcebf8_1920px)] pb-px">
      <div className="relative ml-[9px] w-[154px]">
        <svg width="28" height="26" viewBox="0 0 28 26">
          <circle cx="13" cy="14" r="10" fill="#f18a20" />
          <path d="M4 11a3.500 3.500 0 0 1 0-7 4 4 0 0 1 7.500-.5A3.500 3.500 0 0 1 12 11z" fill="#b2c8f2" />
          <path d="M14 23.500a3.300 3.300 0 0 1 0-6.600 4 4 0 0 1 7.500 0 3.300 3.300 0 0 1 0 6.600z" fill="#c3d5f7" stroke="#7f9fdd" strokeWidth=".6" />
        </svg>
        <Badge className="-top-[3px] left-3 size-4 bg-[#c42b1c] text-[11px]">1</Badge>
      </div>
      <svg className="-ml-px" width="24" height="24" viewBox="0 0 24 24"><path d="M0 0h11.500v11.500H0zM12.500 0H24v11.500H12.500zM0 12.500h11.500V24H0zM12.500 12.500H24V24H12.500z" fill="url(#win)" /><defs><linearGradient id="win" x1="0" y1="0" x2="1" y2="1"><stop stopColor="#4fd0fb" /><stop offset="1" stopColor="#0571ce" /></linearGradient></defs></svg>
      <div className="ml-[13px] flex h-8 w-[219px] items-center rounded-full border border-[#d6d6d6] bg-[#fbfbfb] pr-1 pl-2.5">
        <svg width="15" height="16" viewBox="0 0 15 16" fill="none" stroke="#222" strokeWidth="1.700"><circle cx="6.500" cy="6.500" r="5.400" /><path d="m10.500 10.700 4 4.500" /></svg>
        <Fit w={41} className="ml-[11px] text-[14px] text-[#555]">Search</Fit>
        <svg className="ml-auto" width="48" height="24" viewBox="0 0 48 24">
          <ellipse cx="24" cy="21" rx="21" ry="3" fill="#e3bc91" />
          <path d="M5 9l15-3 3 11-15 4z" fill="#f5f8f4" />
          <path d="M5.500 10 8 21l15-4" fill="none" stroke="#338553" strokeWidth="1.600" />
          <path d="M13 7l2 12M7 12l5-1M8 15l5-1M16 9l4-1M17 12l4-1" stroke="#a8bdb2" strokeWidth=".8" />
          <path d="M24 3.500 17 13" stroke="#f19a50" strokeWidth="2.500" />
          <path d="M31 7a6 6 0 0 1 13 0v13.500H31z" fill="#1688ee" />
          <path d="M33 12h9v8.500h-9z" fill="#2355cc" /><path d="M35 3c0-3 5-3 5 0" fill="none" stroke="#164fab" />
          <path d="M2 2v5M0 4.500h5" stroke="#d16cf2" strokeWidth="1.500" /><circle cx="46.500" cy="5" r="1.300" fill="#f8b62b" /><circle cx="27" cy="12" r="1.200" fill="#52d5e8" />
        </svg>
      </div>
      <div className="ml-[3px] flex">
        {apps.map((a, i) => (
          <div key={i} className="flex w-11 justify-center">
            <div className={"relative flex h-10 w-[38px] items-center justify-center rounded " + (a.mark === "active" ? "bg-[#f8f8f8] ring-1 ring-[#e4e4e4]" : a.mark === "alert" ? "bg-[#fbe5e6]" : "")}>
              <span className="relative flex items-center justify-center">{a.icon}</span>
              {a.mark && <span className={"absolute bottom-0 h-[3px] rounded-full " + (a.mark === "active" ? "w-4 bg-[#0078d4]" : a.mark === "alert" ? "w-1.5 bg-[#c42b1c]" : "w-1.5 bg-[#8a8a8a]")} />}
            </div>
          </div>
        ))}
      </div>
      <svg className="ml-[25px]" width="10" height="6" viewBox="0 0 10 6" fill="none" stroke="#222" strokeWidth="1.300"><path d="M.5 5.500 5 1l4.500 4.500" /></svg>
      <svg className="ml-[18px]" width="17" height="12" viewBox="0 0 17 12"><path d="M4 11a3.300 3.300 0 0 1-1.500-6C3.500 1.800 5.500.8 8 .8s4 1.200 4.800 3.700A3.400 3.400 0 0 1 12.500 11z" fill="#ededed" stroke="#222" /><path d="M2.500 5.500C4 2 6 1.200 8 1.200s3.800 1 4.500 3.300c-1.500 0-2.500.5-3.500 1.500C7 4.500 4.500 4.500 2.500 5.500z" fill="#7d7d7d" /></svg>
      <div className="ml-[16px] flex w-[26px] flex-col items-center text-[12px] leading-4 text-[#1c1c1c]">
        <Fit w={24}>ENG</Fit>
        <Fit w={15}>US</Fit>
      </div>
      <svg className="ml-4" width="17" height="17" viewBox="0 0 17 17" fill="none" stroke="#222" strokeWidth="1.100"><path d="M9.500 1.500h-8v10h11V8M4 15.500h6M7 11.500v4M14 6.500v9.500M12 1.500h4v3l-1 1.500h-2l-1-1.500zM14 1.500v2" /></svg>
      <svg className="ml-[6px]" width="17" height="14" viewBox="0 0 17 14" fill="none" stroke="#222" strokeWidth="1.100"><path d="M1 4.500h2.500L7 1.500v11L3.500 9.500H1zM9.500 5c.8 1.200.8 2.800 0 4M11.700 3c1.600 2.300 1.600 5.700 0 8M14 1.300c2.300 3.400 2.300 8 0 11.400" /></svg>
      <div className="mr-[19px] ml-auto flex flex-col items-end text-[12px] leading-4 text-[#1c1c1c]">
        <Fit w={50}>04:44 PM</Fit>
        <Fit w={62}>09-09-2023</Fit>
      </div>
    </div>
  );
}

export default function App() {
  return (
    <div className="flex h-[1080px] w-[1920px] flex-col overflow-hidden bg-[#f0ebf8] font-['Open_Sans','Noto_Sans',sans-serif]">
      <header className="h-[109px] shrink-0 border-b border-[#5282b4] bg-[#14529a]">
        <TabStrip />
        <Toolbar />
        <Bookmarks />
      </header>

      <main className="relative flex h-[923px]">
        <FormPage />
        <div className="flex w-[17px] flex-col items-center bg-[#f1f1f1]">
          <svg className="my-1.5 shrink-0" width="8" height="5" viewBox="0 0 8 5"><path d="M0 5h8L4 0z" fill="#a3a3a3" /></svg>
          <div className="h-[421px] w-[13px] bg-[#c1c1c1]" />
          <svg className="mt-auto mb-[7px]" width="8" height="4" viewBox="0 0 8 4"><path d="M0 0h8L4 4z" fill="#505050" /></svg>
        </div>

        <svg className="absolute top-[885px] left-[14px]" width="20" height="20" viewBox="0 0 20 20"><path d="M2 0h16a2 2 0 0 1 2 2v12a2 2 0 0 1-2 2H4l-4 4V2a2 2 0 0 1 2-2z" fill="#6c6971" /><path d="M9 4h2v4.500H9zM9 10h2v2H9z" fill="#f0ebf8" /></svg>

        <div className="absolute top-[827px] left-[1599px] flex flex-col items-start text-[#b9b8bf]">
          <Fit w={157} className="text-[19px] leading-7">Activate Windows</Fit>
          <Fit w={236} className="text-[14.500px] leading-[18px]">Go to Settings to activate Windows.</Fit>
        </div>

        <div className="absolute top-[872px] left-[1841px] flex h-[39px] w-[79px] flex-col items-start overflow-hidden bg-[#23601e] pl-[3px] text-[15px] leading-[18px] text-white">
          <div className="flex items-center gap-1">
            <svg className="shrink-0" width="6" height="10" viewBox="0 0 6 10" fill="#ff0"><path d="M2 0h2v6h2L3 10 0 6h2z" /></svg>
            <Fit w={60}>7.0 Mbps</Fit>
          </div>
          <div className="flex items-center gap-1">
            <svg className="shrink-0" width="6" height="10" viewBox="0 0 6 10" fill="#ff0"><path d="M2 10h2V4h2L3 0 0 4h2z" /></svg>
            <Fit w={66}>207.5 Kbp</Fit>
          </div>
        </div>
      </main>

      <Taskbar />
    </div>
  );
}
